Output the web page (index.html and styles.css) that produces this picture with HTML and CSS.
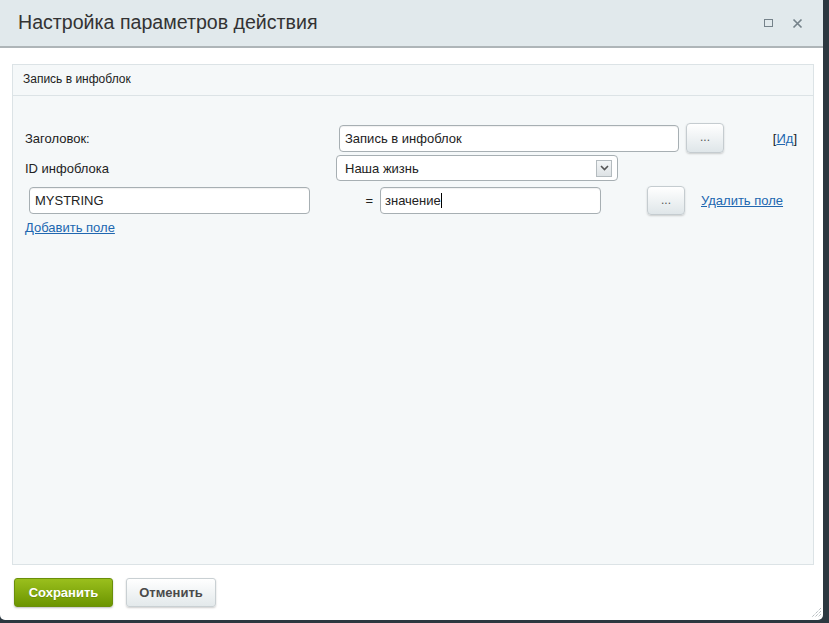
FILE: index.html
```html
<!DOCTYPE html>
<html lang="ru">
<head>
  <meta charset="UTF-8" />
  <title>Настройка параметров действия</title>
  <link rel="stylesheet" href="styles.css">
</head>
<body>
  <div class="dialog">
    <div class="dialog-head">
      <span class="dialog-title">Настройка параметров действия</span>
      <span class="head-btn btn-max"></span>
      <span class="head-btn btn-close">
        <svg width="11" height="11" viewBox="0 0 11 11"><path d="M1.5 1.5l8 8M9.5 1.5l-8 8" stroke="#75828a" stroke-width="1.7"/></svg>
      </span>
    </div>

    <div class="dialog-body">
      <div class="panel">
        <div class="panel-title">Запись в инфоблок</div>
        <div class="panel-content">
          <div class="row row-title">
            <div class="label">Заголовок:</div>
            <div class="input input-title">Запись в инфоблок</div>
            <div class="dots">...</div>
            <div class="id-link">[<a href="#">Ид</a>]</div>
          </div>
          <div class="row row-iblock">
            <div class="label">ID инфоблока</div>
            <div class="select">
              <span>Наша жизнь</span>
              <span class="select-arrow">
                <svg width="9" height="6" viewBox="0 0 9 6"><path d="M1 1l3.5 3.5L8 1" fill="none" stroke="#555" stroke-width="1.6"/></svg>
              </span>
            </div>
          </div>
          <div class="row row-field">
            <div class="input input-name">MYSTRING</div>
            <div class="eq">=</div>
            <div class="input input-value">значение<span class="caret"></span></div>
            <div class="dots dots-field">...</div>
            <a class="link del-link" href="#">Удалить поле</a>
          </div>
          <a class="link add-link" href="#">Добавить поле</a>
        </div>
      </div>
    </div>

    <div class="dialog-foot">
      <div class="btn btn-save">Сохранить</div>
      <div class="btn btn-cancel">Отменить</div>
      <svg class="grip" width="11" height="11" viewBox="0 0 11 11">
        <path d="M10 1L1 10M10 4L4 10M10 7L7 10" stroke="#9aa3a8" stroke-width="1" stroke-dasharray="1 1"/>
      </svg>
    </div>
  </div>
</body>
</html>
```

FILE: styles.css
```css
* { box-sizing: border-box; margin: 0; padding: 0; }
html, body { width: 100%; height: 100%; }
body { background: #2c3840; font-family: "Liberation Sans", Arial, sans-serif; font-size: 13px; color: #222; overflow: hidden; }

.dialog { width: 823px; height: 620px; background: #fff; border-radius: 0 0 5px 5px; display: flex; flex-direction: column; }

.dialog-head { height: 48px; background: #e1e9ec; border-bottom: 2px solid #aeb5b8; display: flex; align-items: center; padding: 0 20px 0 18px; }
.dialog-title { font-size: 19.6px; color: #333; flex: 1; padding-bottom: 2px; }
.head-btn { display: flex; align-items: center; justify-content: center; }
.btn-max { width: 9px; height: 8px; border: 1.5px solid #75828a; margin-right: 19px; }
.btn-close { width: 11px; height: 11px; }

.dialog-body { padding: 16px 9px 0 12px; }
.panel { height: 501px; background: #f5f8f9; border: 1px solid #dce3e6; }
.panel-title { height: 31px; line-height: 28px; padding-left: 10px; font-size: 12px; color: #222; border-bottom: 1px solid #dce3e6; }
.panel-content { padding: 27px 16px 0 12px; }

.row { display: flex; align-items: center; }
.label { width: 311px; color: #222; }
.input { height: 27px; line-height: 25px; background: #fff; border: 1px solid #a7afb3; border-radius: 4px; padding: 0 5px; box-shadow: inset 0 1px 1px rgba(0,0,0,0.06); white-space: nowrap; }
.dots { width: 38px; height: 30px; line-height: 27px; text-align: center; font-size: 12px; color: #555; border: 1px solid #c5ccd0; border-radius: 4px; background: linear-gradient(#ffffff, #dfe6e9); box-shadow: 0 1px 2px rgba(0,0,0,0.18); }

.row-title { height: 30px; }
.input-title { width: 340px; margin-left: 3px; }
.row-title .dots { margin-left: 7px; }
.id-link { margin-left: auto; }

.row-iblock { height: 26px; margin-top: 2px; }
.select { width: 282px; height: 26px; display: flex; align-items: center; justify-content: space-between; padding: 0 5px 0 8px; background: #fff; border: 1px solid #a7afb3; border-radius: 4px; }
.select-arrow { width: 16px; height: 17px; display: flex; align-items: center; justify-content: center; border: 1px solid #b4bbbf; background: linear-gradient(#f4f6f7, #dde2e5); }

.row-field { height: 29px; margin-top: 5px; }
.input-name { width: 281px; margin-left: 4px; }
.eq { width: 70px; text-align: right; padding-right: 7px; }
.input-value { width: 221px; padding-left: 4px; }
.caret { display: inline-block; width: 1px; height: 15px; background: #000; vertical-align: -3px; }
.dots-field { margin-left: 46px; height: 29px; }
.del-link { margin-left: 16px; }

.link, .id-link a { color: #2067b0; text-decoration: underline; }
.add-link { display: inline-block; margin-top: 5px; }

.dialog-foot { flex: 1; display: flex; align-items: flex-start; padding: 13px 0 0 14px; position: relative; }
.btn { height: 29px; line-height: 28px; font-weight: bold; border-radius: 3px; text-align: center; }
.btn-save { width: 99px; color: #fff; background: linear-gradient(#9abf1d, #6c9500); border: 1px solid #6a8f0a; box-shadow: 0 1px 2px rgba(0,0,0,0.25); text-shadow: 0 1px 0 rgba(0,0,0,0.15); }
.btn-cancel { width: 90px; margin-left: 13px; color: #4a4a4a; background: linear-gradient(#ffffff, #e3e9eb); border: 1px solid #c9d0d3; box-shadow: 0 1px 2px rgba(0,0,0,0.2); }
.grip { position: absolute; right: 1px; bottom: 2px; }
```
